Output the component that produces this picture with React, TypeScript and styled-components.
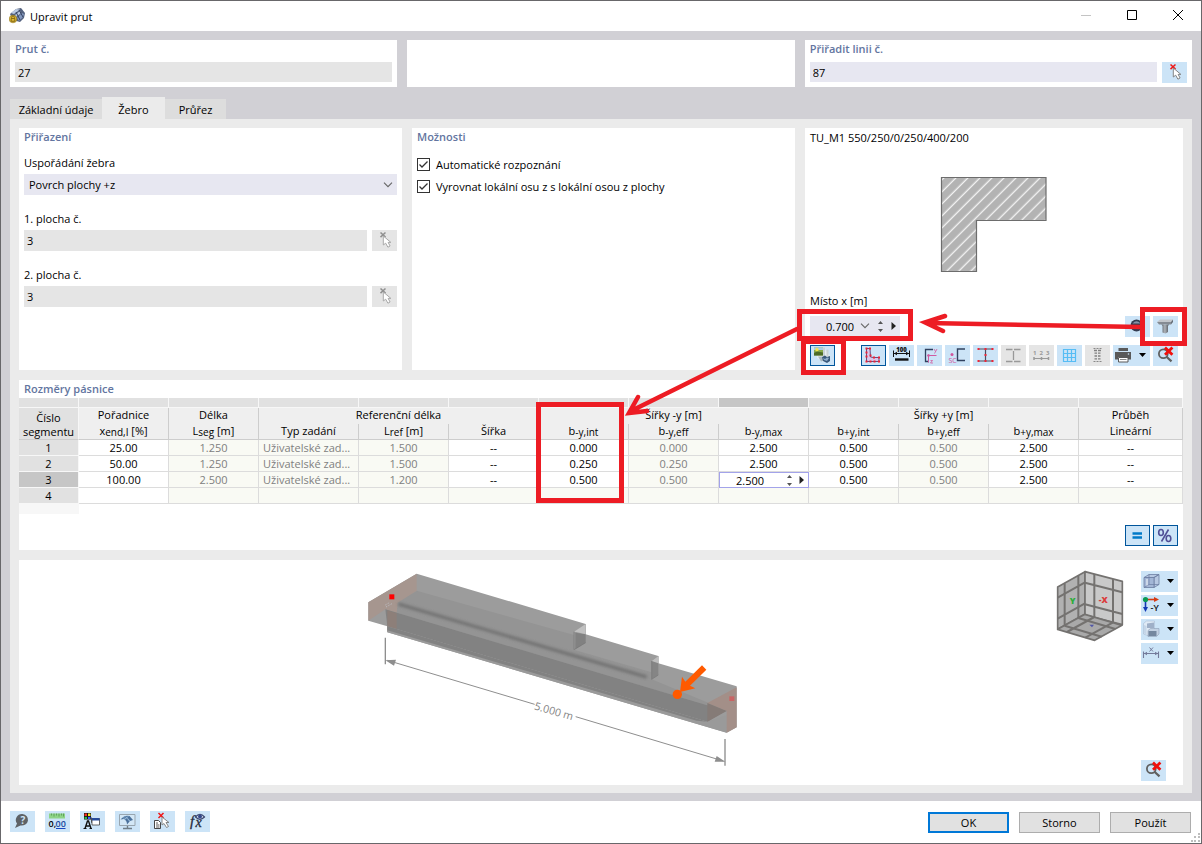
import React from "react";
import styled, { createGlobalStyle, css } from "styled-components";

const GlobalStyle = createGlobalStyle`
  * { box-sizing: border-box; }
  body { margin: 0; background: #fff; }
  body, button, input, select {
    font-family: "Open Sans", "Noto Sans", sans-serif;
    font-size: 11px;
    color: #000;
  }
  button, input, select { margin: 0; padding: 0; border: 0; border-radius: 0; outline: none; }
`;

/* ---------- window frame ---------- */

const Window = styled.div`
  position: relative;
  display: flex;
  flex-direction: column;
  min-height: 100vh;
  border: 1px solid #68676a;
  background: #fff;
`;

const TitleBar = styled.header`
  display: flex;
  align-items: center;
  height: 30px;
  padding-left: 8px;
  gap: 5px;
`;

const Title = styled.h1`
  flex: 1;
  margin: 0;
  font-size: 11px;
  font-weight: 400;
`;

const WindowControls = styled.div`
  display: flex;
`;

const WindowButton = styled.button`
  display: grid;
  place-items: center;
  width: 46px;
  height: 30px;
  padding-bottom: 2px;
  background: none;
`;

const Body = styled.main`
  display: flex;
  flex: 1;
  flex-direction: column;
  padding: 9px 9px 8px;
  background: #d1d0d5;
`;

const HeaderCards = styled.div`
  display: grid;
  grid-template-columns: 1fr 1fr 1fr;
  gap: 10px;
`;

const HeaderCard = styled.section`
  min-height: 47px;
  padding: 0 5px 4px;
  background: #fff;
`;

const CardTitle = styled.h2<{ $gap?: number }>`
  margin: 0 0 ${(p) => p.$gap ?? 0}px;
  font-size: 11px;
  font-weight: 600;
  line-height: 18px;
  color: #6375a0;
`;

const Tabs = styled.nav`
  display: flex;
  align-items: flex-end;
  margin-top: 10px;
`;

const Tab = styled.button<{ $active?: boolean; $width: number }>`
  width: ${(p) => p.$width}px;
  height: ${(p) => (p.$active ? 22 : 20)}px;
  padding-top: ${(p) => (p.$active ? 2 : 0)}px;
  background: ${(p) => (p.$active ? "#ebebeb" : "#dddddd")};
`;

const Page = styled.div`
  display: flex;
  flex: 1;
  flex-direction: column;
  gap: 10px;
  padding: 9px 9px 8px;
  background: #ebebeb;
`;

const Panels = styled.div`
  display: grid;
  grid-template-columns: 383fr 383fr 378fr;
  gap: 10px;
`;

const Panel = styled.section`
  display: flex;
  flex-direction: column;
  min-width: 0;
  min-height: 242px;
  padding: 0 5px 4px;
  background: #fff;
`;

/* ---------- form parts ---------- */

const Label = styled.label`
  display: block;
  line-height: 16px;
  margin-bottom: 3px;
`;

const FieldGroup = styled.div`
  margin-bottom: 16px;
`;

const FieldRow = styled.div`
  display: flex;
  gap: 5px;
`;

const TextField = styled.input<{ $editable?: boolean; $height?: number }>`
  flex: 1;
  min-width: 0;
  width: 100%;
  height: ${(p) => p.$height ?? 21}px;
  padding: 0 3px;
  background: ${(p) => (p.$editable ? "#e7e7f1" : "#e5e5e5")};
`;

const SelectBox = styled.div`
  display: grid;
  align-items: center;
  background: #e7e7f1;

  select, svg { grid-area: 1 / 1; }
  svg { justify-self: end; margin-right: 4px; pointer-events: none; }
`;

const Select = styled.select`
  appearance: none;
  width: 100%;
  height: 21px;
  padding: 0 20px 0 5px;
  background: transparent;
`;

const CheckList = styled.div`
  display: flex;
  flex-direction: column;
`;

const CheckLabel = styled.label`
  display: flex;
  align-items: center;
  gap: 6px;
  height: 22px;
`;

const CheckMark = styled.span`
  display: grid;
  width: 13px;
  height: 13px;

  input, svg { grid-area: 1 / 1; }
  svg { display: none; pointer-events: none; }
  input:checked + svg { display: block; }
`;

const CheckInput = styled.input`
  appearance: none;
  width: 13px;
  height: 13px;
  border: 1px solid #333;
  background: #fff;
`;

const toneBackground = { blue: "#cce4f7", gray: "#e5e5e5" };

const IconButton = styled.button<{ $tone?: "blue" | "gray"; $pressed?: boolean; $wide?: boolean }>`
  flex: none;
  display: block;
  width: ${(p) => (p.$wide ? 37 : 25)}px;
  height: 21px;
  background: ${(p) => toneBackground[p.$tone ?? "blue"]};
  ${(p) => p.$pressed && css`box-shadow: inset 0 0 0 1px #00559b;`}

  svg { display: block; }
`;

/* ---------- section preview ---------- */

const SectionName = styled.p`
  margin: 0;
  line-height: 20px;
`;

const SectionDrawing = styled.div`
  display: grid;
  flex: 1;
  place-items: center;
  padding-top: 8px;
`;

const LocationRow = styled.div`
  display: flex;
  align-items: flex-start;
  gap: 3px;
  height: 21px;
  margin: 4px 0 8px;
`;

const Spinner = styled.div`
  display: flex;
  align-items: center;
  width: 90px;
  height: 20px;
  padding-left: 12px;
  margin-right: auto;
  background: #e7e7f1;
`;

const SpinnerInput = styled.input`
  width: 37px;
  height: 20px;
  padding-left: 4px;
  background: transparent;
`;

const TinyButton = styled.button<{ $width: number }>`
  flex: none;
  display: grid;
  place-items: center;
  width: ${(p) => p.$width}px;
  height: 14px;
  background: none;
`;

const Toolbar = styled.div`
  display: flex;
  gap: 3px;

  > :first-child { margin-right: auto; }
`;

/* ---------- table ---------- */

const TablePanel = styled.section`
  padding-bottom: 4px;
  background: #fff;

  > h2 { padding-left: 5px; }
`;

const Table = styled.table`
  width: 100%;
  table-layout: fixed;
  border-collapse: separate;
  border-spacing: 0;

  th, td { padding: 0; font-weight: 400; text-align: center; white-space: nowrap; }
  sub { font-size: 10px; line-height: 0; vertical-align: -1px; }
`;

const StripCell = styled.td<{ $selected?: boolean }>`
  height: 10px;
  border-right: 1px solid #f7f7f7;
  border-bottom: 1px solid #f7f7f7;
  background: ${(p) => (p.$selected ? "#c6c6c6" : "#e1e1e1")};
`;

const CornerHead = styled.th`
  && {
    height: 32px;
    padding-top: 3px;
    white-space: normal;
  }
  border-right: 1px solid #f7f7f7;
  border-bottom: 1px solid #cdcdcd;
  background: #e1e1e1;
  line-height: 14px;
`;

const GroupHead = styled.th`
  height: 16px;
  line-height: 14px;
  vertical-align: top;
  border-right: 1px solid #cdcdcd;
  background: #efefef;
`;

const ColumnHead = styled.th`
  height: 16px;
  line-height: 14px;
  vertical-align: top;
  border-right: 1px solid #cdcdcd;
  border-bottom: 1px solid #cdcdcd;
  background: #efefef;
`;

const RowHead = styled.th<{ $selected?: boolean }>`
  height: 16px;
  line-height: 15px;
  border-right: 1px solid #f7f7f7;
  border-bottom: 1px solid #f7f7f7;
  background: ${(p) => (p.$selected ? "#c6c6c6" : "#e1e1e1")};
`;

const Cell = styled.td<{ $locked?: boolean; $left?: boolean }>`
  height: 16px;
  line-height: 15px;
  border-right: 1px solid #dcdcdc;
  border-bottom: 1px solid #dcdcdc;
  background: ${(p) => (p.$locked ? "#f9faf4" : "#fff")};
  color: ${(p) => (p.$locked ? "#808080" : "#000")};
  ${(p) => p.$left && css`&& { padding-left: 4px; text-align: left; }`}
`;

const EditCell = styled.td`
  height: 16px;
  background: #fff;
`;

const CellEditor = styled.div`
  display: flex;
  align-items: center;
  height: 16px;
  border: 1px solid #a3a3ea;
`;

const CellInput = styled.input`
  flex: 1;
  min-width: 0;
  height: 14px;
  padding-left: 16px;
  background: transparent;
`;

const TailCell = styled.td`
  height: 10px;
  background: #f7f7f7;
`;

const TableActions = styled.div`
  display: flex;
  justify-content: flex-end;
  gap: 3px;
  padding: 11px 5px 0;
`;

/* ---------- viewer and footer ---------- */

const Viewer = styled.section`
  display: flex;
  flex: 1;
  min-height: 225px;
  padding: 10px 5px 4px;
  background: #fff;
`;

const Scene = styled.div`
  display: flex;
  flex: 1;
  justify-content: center;
`;

const ViewTools = styled.div`
  display: flex;
  flex-direction: column;
  gap: 3px;
  margin: 1px 0 0 17px;

  > :last-child { margin-top: auto; }
`;

const Footer = styled.footer`
  position: relative;
  display: flex;
  align-items: center;
  gap: 10px;
  height: 42px;
  padding: 0 10px 0 9px;
`;

const FooterTools = styled.div`
  display: flex;
  gap: 10px;
  margin-right: auto;
  padding-bottom: 2px;
`;

const DialogButton = styled.button<{ $primary?: boolean }>`
  width: 81px;
  height: 21px;
  background: #e1e1e1;
  border: ${(p) => (p.$primary ? "2px solid #0078d7" : "1px solid #adadad")};
`;

const Grip = styled.svg`
  position: absolute;
  right: 1px;
  bottom: 1px;
`;

const Annotations = styled.svg`
  position: absolute;
  top: -1px;
  left: -1px;
  width: calc(100% + 2px);
  height: calc(100% + 2px);
  pointer-events: none;
`;

/* ---------- icons ---------- */

const Icon = ({ children, w = 25 }: { children: React.ReactNode; w?: number }) => (
  <svg width={w} height="21" viewBox={`0 0 ${w} 21`} fill="none" aria-hidden="true">
    {children}
  </svg>
);

const Chevron = () => (
  <svg width="10" height="6" viewBox="0 0 10 6" fill="none" stroke="#666" strokeWidth="1.1" aria-hidden="true">
    <path d="M1 .7 5 4.7 9 .7" />
  </svg>
);

const UpDown = () => (
  <svg width="7" height="11" viewBox="0 0 7 11" fill="#555" aria-hidden="true">
    <path d="M3.5 0 6 3H1zM3.5 11 6 8H1z" />
  </svg>
);

const RightTriangle = () => (
  <svg width="5" height="8" viewBox="0 0 5 8" fill="#222" aria-hidden="true">
    <path d="M.5 0 5 4 .5 8z" />
  </svg>
);

const PickIcon = ({ muted }: { muted?: boolean }) => (
  <Icon>
    <path d="M8.500 2.500l5 4.600M13.500 2.500l-5 4.600" stroke={muted ? "#8f8f8f" : "#f01818"} strokeWidth="1.500" />
    <path
      d="M11.300 6v9l2.400-1.800 2.200 4 2.200-1.200-2-3.600h2.800z"
      fill="#fff"
      stroke={muted ? "#a9a9a9" : "#858585"}
      strokeWidth="1"
    />
  </Icon>
);

const ResetZoomIcon = () => (
  <Icon>
    <circle cx="10.300" cy="8.800" r="4.400" stroke="#606060" strokeWidth="1.800" />
    <path d="M13.500 11.800l5 4.600" stroke="#606060" strokeWidth="2.200" />
    <path d="M12 2.600l7.400 7.200M19.400 2.600L12 9.800" stroke="#f0100c" strokeWidth="2.800" />
  </Icon>
);

const DropIcon = ({ children, x = 26 }: { children: React.ReactNode; x?: number }) => (
  <Icon w={37}>
    {children}
    <path d={`M${x} 8h7l-3.500 4z`} fill="#000" />
  </Icon>
);

const AppIcon = () => (
  <svg width="16" height="16" viewBox="0 0 16 16" aria-hidden="true">
    <path d="M1 6 7 1l5-1 4 5-1 5-4 4-7-2z" fill="#53617e" />
    <path d="M2 5 7 1l4 .5L5 6zM6 7l5-4 1 2-5 4z" fill="#b9c9e2" />
    <path d="m8 10 5-5 2 1-1 3-4 4z" fill="#8196bd" />
    <path d="M10 2l4 7M7 4l4 8" stroke="#34415f" />
    <circle cx="4" cy="11" r="3.800" fill="#dfb936" stroke="#8b7322" strokeWidth=".6" />
    <path d="M2.600 10.500V9.400a1.400 1.400 0 0 1 2.800 0v1.100M2.200 10.500h3.600v2.800H2.200z" fill="none" stroke="#816413" strokeWidth=".9" />
  </svg>
);

const SectionImageIcon = () => (
  <Icon>
    <path d="M8 3h6l6 8-6 6-7-4z" fill="#e9eef0" />
    <path d="M13 2.500h2v9h-2zM16.500 4.500h2v7h-2z" fill="#c9d2d6" />
    <path d="M4 2.500h9v8H4z" fill="#87a84a" />
    <path d="M4 2.500h9v2.500H4z" fill="#a8cde5" />
    <circle cx="7" cy="4.800" r="1.700" fill="#f5e44b" />
    <path d="M4 8l3-1.500 6 1v3H4z" fill="#4d6b27" />
    <path d="M8 11.500h4l2 4-3 1z" fill="#a9b8bf" />
    <path d="M12 12l3-1.500 2 1.500 3-1v5l-3 2-4-2z" fill="#38587b" />
    <path d="M13 13l2 1 2-1.500 2 .5-2 3-3-1z" fill="#8eadce" />
  </Icon>
);

const OutlineIcon = () => (
  <Icon>
    <path d="M5.500 3.500H9l.5 8.500 3 .5h5.500v4H5.500z" fill="#d9c5e8" stroke="#5a3f72" strokeWidth=".9" />
    <g fill="#ee2035">
      <path d="M4.500 2.500h2v2h-2zM8 2.500h2v2H8zM4.500 6.500h2v2h-2zM4.500 10.500h2v2h-2zM8.500 9.500h2v2h-2z" />
      <path d="M4.500 15.500h2v2h-2zM8.500 15.500h2v2h-2zM12.500 15.500h2v2h-2zM17 15.500h2v2h-2zM17 11.500h2v2h-2zM12 11.500h2v2h-2z" />
    </g>
  </Icon>
);

const DimensionIcon = () => (
  <Icon>
    <text x="12.500" y="6.500" textAnchor="middle" fontFamily="Open Sans" fontSize="6" fontWeight="800" fill="#111">100</text>
    <path d="M5 8.500h15" stroke="#111" strokeWidth="1" />
    <path d="M5 8.500l3-1.700v3.400zM20 8.500l-3-1.700v3.400z" fill="#111" />
    <path d="M4.500 5.500v6.500M20.500 5.500v6.500" stroke="#111" />
    <path d="M6 14.500h13.500" stroke="#111" strokeWidth="2.400" />
  </Icon>
);

const AxesIcon = () => (
  <Icon>
    <path d="M16 4.500H8.500v12H12" stroke="#30415f" strokeWidth="1.300" />
    <path d="M10.500 10.500h9M11.500 9.500v8" stroke="#d05aa0" strokeWidth="1" />
    <path d="M17 4l1.500 2.500M20 4l-2.500 4.500M13.500 15.500h2l-2 2.500h2.500" stroke="#d05aa0" strokeWidth=".8" />
    <circle cx="11.500" cy="10.500" r="1.300" fill="#d05aa0" />
  </Icon>
);

const ShearCenterIcon = () => (
  <Icon>
    <path d="M20 4H12.500v11.500H20" stroke="#30415f" strokeWidth="1.400" />
    <circle cx="7" cy="9.500" r="1.500" fill="#d0559c" />
    <text x="3.500" y="18" fontFamily="Open Sans" fontSize="7" fill="#d0559c">SC</text>
  </Icon>
);

const StressPointsIcon = () => (
  <Icon>
    <path d="M5 4h15M5 16h15M12.500 4v12" stroke="#4c4c60" strokeWidth="1.200" />
    <path d="M4.500 4h2M11.500 4h2M18.500 4h2M4.500 16h2M11.500 16h2M18.500 16h2M11.500 10h2" stroke="#ee2538" strokeWidth="2" />
  </Icon>
);

const PartsIcon = () => (
  <Icon>
    <path d="M5 4.500h6.500M13 4.500h6.500M5 16.500h6.500M13 16.500h6.500M12.500 6v9" stroke="#999" strokeWidth="1.300" />
  </Icon>
);

const NumberingIcon = () => (
  <Icon>
    <text x="4" y="10" fontFamily="Open Sans" fontSize="6" fontWeight="700" fill="#999">1</text>
    <text x="10.500" y="10" fontFamily="Open Sans" fontSize="6" fontWeight="700" fill="#999">2</text>
    <text x="17" y="10" fontFamily="Open Sans" fontSize="6" fontWeight="700" fill="#999">3</text>
    <path d="M5 13.500h15" stroke="#999" />
    <path d="M5 12v3M12.500 12v3M19.500 12v3" stroke="#999" strokeWidth="1.500" />
  </Icon>
);

const GridIcon = () => (
  <Icon>
    <path d="M6 4.500h13M6 8.500h13M6 12.500h13M6 16.500h13M6.500 4v13M10.500 4v13M14.500 4v13M18.500 4v13" stroke="#56bdf5" strokeWidth="1.200" />
  </Icon>
);

const FibersIcon = () => (
  <Icon>
    <path d="M8.500 3.500h8M8.500 16.500h8" stroke="#888" strokeDasharray="2 1" />
    <path d="M9 5.500h3M13 5.500h3M9.500 8.200h2.500M13 8.200h2.500M9.500 11h2.500M13 11h2.500M9.500 13.800h2.500M13 13.800h2.500" stroke="#808080" strokeWidth="1.300" />
  </Icon>
);

const PrintIcon = () => (
  <DropIcon>
    <path d="M5.500 3h9.500v3H5.500z" fill="#595959" />
    <path d="M2 7h16v7.500h-3v-2.500H5v2.500H2z" fill="#595959" />
    <path d="M5.500 12.500h9.500V17H5.500z" fill="#fff" stroke="#595959" />
    <path d="M7 14.500h6.500" stroke="#888" />
    <circle cx="15.500" cy="9" r=".8" fill="#cce4f7" />
  </DropIcon>
);

const EyeIcon = () => (
  <Icon>
    <circle cx="11.500" cy="9.500" r="6" fill="#343c50" />
    <path d="M7.500 7.500q4-4.500 8 0z" fill="#8792a8" />
    <path d="M8.500 11.500a3.300 2.500 0 0 0 6 0z" fill="#fff" />
  </Icon>
);

const BeamIcon = () => (
  <Icon>
    <defs>
      <linearGradient id="beamWeb" x1="0" x2="1">
        <stop offset="0" stopColor="#5c6168" />
        <stop offset=".45" stopColor="#aeb4ba" />
        <stop offset="1" stopColor="#4c5158" />
      </linearGradient>
    </defs>
    <path d="M4 6 7 3.500h13L18 6z" fill="#c3c7cc" />
    <path d="M4 6h14v2.500H6z" fill="#858b93" />
    <path d="M18 6 20 3.500V6L18 8.500z" fill="#666c74" />
    <path d="M8.500 8.500H16l-1 1.500v6l-2.500 1.500-3-1V10z" fill="url(#beamWeb)" />
  </Icon>
);

const ViewBoxIcon = () => (
  <DropIcon>
    <path d="M3 6.500l5-3h10l-5 3zM13 6.500l5-3v10l-5 3z" fill="#b7c8e2" stroke="#6c7da2" strokeWidth=".8" />
    <path d="M3 6.500h10v10H3z" fill="#a3b6d6" stroke="#6c7da2" strokeWidth=".8" />
    <path d="M8 3.500v10H18M8 13.500l-5 3" stroke="#6c7da2" strokeWidth=".7" />
    <path d="M5 8h2v6.500H5z" fill="#fff" opacity=".45" />
  </DropIcon>
);

const ViewAxisIcon = () => (
  <DropIcon>
    <path d="M5 4.500h9" stroke="#d63a13" strokeWidth="1.600" />
    <path d="M13 2l5 2.500-5 2.500z" fill="#d63a13" />
    <path d="M4.500 6v7" stroke="#1238b5" strokeWidth="1.600" />
    <path d="M2 12h5l-2.500 5z" fill="#1238b5" />
    <circle cx="4.500" cy="4.500" r="2.600" fill="#0a9a54" />
    <text x="9.500" y="15.500" fontFamily="Open Sans" fontSize="9" fontWeight="600" fill="#111">-Y</text>
  </DropIcon>
);

const RenderIcon = () => (
  <DropIcon>
    <path d="M2.500 4.500l3-2.500h8v8l-3 2H8v5l-5.500-2z" fill="#dfeaf5" stroke="#9fb2cc" strokeWidth=".5" />
    <path d="M6 4.500l7-1V9H6z" fill="#9fb0c8" />
    <path d="M7 11.500 9.500 9.500H18V15l-2.500 2.500H7z" fill="#c2d1e3" stroke="#8093ad" strokeWidth=".5" />
    <path d="M7.500 12h8v5h-8z" fill="#74879f" />
    <path d="M3 6l2.500 1v8.500L3 14.500z" fill="#c5d6e8" />
  </DropIcon>
);

const LengthIcon = () => (
  <DropIcon>
    <path d="M2.500 8.500v6.500M17.500 8.500v6.500M3 10.500h14" stroke="#747b9b" strokeWidth="1.100" />
    <path d="M6 8.700l-3 1.800 3 1.800zM14 8.700l3 1.800-3 1.800z" fill="#747b9b" />
    <path d="M8.500 4.500l3.500 4M12 4.500 8.500 8.500" stroke="#747b9b" />
  </DropIcon>
);

const HelpIcon = () => (
  <Icon>
    <path d="M12.500 3a6.500 5.800 0 1 1-2 11.500L5 17l2-4.500A6 6 0 0 1 12.500 3z" fill="#5e6266" />
    <text x="12.800" y="13" textAnchor="middle" fontFamily="Open Sans" fontSize="10" fontWeight="700" fill="#cce4f7">?</text>
  </Icon>
);

const UnitsIcon = () => (
  <Icon>
    <path d="M4 2.500h16v5H4z" fill="#8ed487" />
    <path d="M6.500 2.500v2M9 2.500v3M11.500 2.500v2M14 2.500v3M16.500 2.500v2M18.500 2.500v3" stroke="#4a8d49" strokeWidth=".7" />
    <text x="3.500" y="15.500" fontFamily="Open Sans" fontSize="9" fontWeight="600" fill="#000">0,</text>
    <text x="10.500" y="15.500" fontFamily="Open Sans" fontSize="9" fontWeight="600" fill="#17489c">00</text>
    <path d="M11 17.500h9.500" stroke="#1748c0" />
  </Icon>
);

const DisplayIcon = () => (
  <Icon>
    <path d="M4 2h7v6.500H4z" fill="#111" />
    <path d="M4.500 2.500h2.500V5H4.500z" fill="#f23022" />
    <path d="M8 2.500h2.500V5H8z" fill="#f6e51d" />
    <path d="M4.500 5.800h2.500V8H4.500z" fill="#2db94b" />
    <path d="M8 5.800h2.500V8H8z" fill="#3b62ff" />
    <path d="M5 17.500 7.500 10h1l2.500 7.500M6 15h4" stroke="#111" strokeWidth="1.400" />
    <path d="M3.500 17.500h3M9.500 17.500H12" stroke="#111" />
    <path d="M11.500 6.500v5H12.500" stroke="#333" strokeWidth=".8" />
    <path d="M12 7.500h7.500v6.500H12z" fill="#fff" stroke="#444" strokeWidth=".8" />
    <path d="M12 7h7.500v2.500H12z" fill="#274b9b" />
  </Icon>
);

const MonitorIcon = () => (
  <Icon>
    <path d="M4.500 3.500h15.500v11H4.500z" fill="#d3e7f6" stroke="#98a5af" />
    <path d="M12.500 15v2M8 17.500h9" stroke="#6f7d87" strokeWidth="1.400" />
    <path d="M5.500 8.500q4-5 9-3.500l3.500 4-3 1-3 3.500q0-4-3-5.500z" fill="#4a709b" />
    <path d="M8 7q4-1 7 3M10.500 5.500q3.500 2 4 5M13.500 5.500q-3 1-4 3.500" stroke="#9cbede" strokeWidth=".7" />
  </Icon>
);

const SelectListIcon = () => (
  <Icon>
    <path d="M4.500 9.500h4l2 2v6h-6z" fill="#fff" stroke="#333" strokeWidth=".9" />
    <path d="M6 12h2M6 14h3.500M6 16h3.500" stroke="#333" strokeWidth=".8" />
    <path d="M8.500 2l5 5M13.500 2l-5 5" stroke="#f01818" strokeWidth="1.500" />
    <path d="M12 6v8l2-1.500 2.500 4 2-1-2.500-4H19z" fill="#fff" stroke="#858585" />
  </Icon>
);

const FormulaIcon = () => (
  <Icon>
    <text x="5" y="15" fontFamily="Liberation Serif" fontSize="15" fontStyle="italic" fill="#262b3c" stroke="#262b3c" strokeWidth=".3">f</text>
    <text x="10.500" y="16" fontFamily="Liberation Serif" fontSize="14" fontStyle="italic" fill="#262b3c" stroke="#262b3c" strokeWidth=".3">x</text>
    <path d="M10.500 6q4.500-5.500 9 0-4.500 4.500-9 0z" fill="#dbe6f4" stroke="#3b466e" strokeWidth="1.200" />
    <circle cx="15" cy="5.500" r="2" fill="#34478a" />
  </Icon>
);

/* ---------- drawings ---------- */

const CrossSection = () => (
  <svg width="108" height="98" viewBox="0 0 108 98" role="img" aria-label="Průřez">
    <defs>
      <pattern id="hatch" width="8.500" height="8.500" patternUnits="userSpaceOnUse" patternTransform="rotate(45)">
        <rect width="8.500" height="8.500" fill="#b3b3b3" />
        <path d="M4 0v8.500" stroke="#fff" strokeWidth="1.100" />
      </pattern>
    </defs>
    <path d="M1.500 1.500H106v43H36.500v51h-35z" fill="url(#hatch)" stroke="#6d6d6d" strokeWidth="1.200" />
  </svg>
);

const BeamScene = () => (
  <svg width="400" height="200" viewBox="-30 45 1200 600" fill="none" role="img" aria-label="5.000 m">
    <defs>
      <filter id="soft" x="-10%" y="-10%" width="120%" height="120%">
        <feGaussianBlur stdDeviation="4" />
      </filter>
    </defs>
    <path d="M200 56 707 207V238L925 303V325L1160 394V517L1130 533 112 232V214L55 197V142z" fill="#9c9c9c" />
    <path d="M200 107 672 240V284L905 352V373L1076 444 1127 467 106 163z" fill="#949494" />
    <path d="M55 142 200 56V107L143 143 140 178 106 163 55 197z" fill="#a6968f" />
    <path d="M106 163 1127 467 1072 500 112 214z" fill="#828282" />
    <path d="M112 166 140 175V222L112 230z" fill="#8d7f79" />
    <path d="M112 214 1072 500 1130 480V533L112 232z" fill="#9a9a9a" />
    <path d="M112 214 1072 500 1040 497 112 226z" fill="#828282" />
    <path d="M145 147 890 366" stroke="#666" strokeWidth="9" opacity=".8" filter="url(#soft)" />
    <path d="M672 230 707 207V263L672 284z" fill="#999" />
    <path d="M676 233 707 238V263L676 283z" fill="#818181" />
    <path d="M672 230 707 207V238L679 231z" fill="#c1c1c1" />
    <path d="M905 318 925 303V360L905 373z" fill="#858585" />
    <path d="M905 318 925 303V325z" fill="#bdbdbd" />
    <path d="M672 230V284L707 263M905 318V373L925 360" stroke="#777" strokeWidth="2" />
    <path d="M1160 397V517L1130 533V468L1072 444z" fill="#a38f88" />
    <path d="M1072 444 1130 468 1072 500z" fill="#857b77" />
    <path d="M106 150l14-8M108 156l18-10" stroke="#c6cbd6" strokeWidth="2" strokeDasharray="4 4" />
    <path d="M118 118h15v15h-15z" fill="#f00" />
    <path d="M1138 424h15v14h-15z" fill="#c96464" />
    <g stroke="#8e8e8e" strokeWidth="4">
      <path d="M106 248V328M1125 552V632" />
      <path d="M112 316 554 448M677 485 1120 618" strokeWidth="3" />
    </g>
    <path d="M106 316 138 314 132 332zM1126 620 1094 620 1100 603z" fill="#8e8e8e" />
    <text
      x="612"
      y="480"
      transform="rotate(16 612 468)"
      textAnchor="middle"
      fontFamily="Open Sans"
      fontSize="32"
      fill="#848484"
    >
      5.000 m
    </text>
    <path d="M1056 331 1069 344 1020 392 1036 400 990 411 996 365 1006 380z" fill="#ff5a00" />
    <circle cx="982" cy="418" r="14" fill="#ff5a00" />
  </svg>
);

type Point = [number, number];

const CubeFace = ({ o, u, v, fill }: { o: Point; u: Point; v: Point; fill: string }) => {
  const at = (a: number, b: number) =>
    `${Math.round(o[0] + u[0] * a + v[0] * b)} ${Math.round(o[1] + u[1] * a + v[1] * b)}`;
  return (
    <g stroke="#747270" strokeLinejoin="round">
      <path d={`M${at(0, 0)}L${at(1, 0)} ${at(1, 1)} ${at(0, 1)}z`} fill={fill} strokeWidth="5" />
      {[0.25, 0.75].map((t) => (
        <path key={t} d={`M${at(t, 0)}L${at(t, 1)}M${at(0, t)}L${at(1, t)}`} strokeWidth="6" />
      ))}
    </g>
  );
};

const ViewCube = () => (
  <svg width="68" height="72" viewBox="78 45 204 216" fill="none" role="img" aria-label="Navigační kostka">
    <CubeFace o={[165, 50]} u={[-82, 46]} v={[0, 127]} fill="#b1b1b1" />
    <CubeFace o={[165, 50]} u={[112, 29]} v={[0, 130]} fill="#c9c9c9" />
    <CubeFace o={[83, 223]} u={[82, -45]} v={[111, 33]} fill="#a9a9a9" />
    <text x="119" y="146" fontFamily="Open Sans" fontSize="26" fontWeight="800" fill="#2cae3a">Y</text>
    <text x="206" y="143" fontFamily="Open Sans" fontSize="26" fontWeight="800" fill="#db3a3a">-X</text>
    <path d="M178 209h14l-6 8z" fill="#5257a8" />
  </svg>
);

/* ---------- data ---------- */

const columnWidths = [60, 90, 90, 100, 90, 90, 90, 90, 90, 90, 90, 90];

const lockedColumns = [false, true, true, true, false, false, true, false, false, true, false, false];

const inputTypeColumn = 2;

const userInput = "Uživatelské zad...";

const segments = [
  ["25.00", "1.250", userInput, "1.500", "--", "0.000", "0.000", "2.500", "0.500", "0.500", "2.500", "--"],
  ["50.00", "1.250", userInput, "1.500", "--", "0.250", "0.250", "2.500", "0.500", "0.500", "2.500", "--"],
  ["100.00", "2.500", userInput, "1.200", "--", "0.500", "0.500", "2.500", "0.500", "0.500", "2.500", "--"],
];

const SegmentTable = () => (
  <Table>
    <colgroup>
      {columnWidths.map((w, i) => (
        <col key={i} width={w} />
      ))}
      <col />
    </colgroup>
    <thead>
      <tr>
        {Array.from({ length: 13 }, (_, i) => (
          <StripCell key={i} $selected={i === 8} />
        ))}
      </tr>
      <tr>
        <CornerHead rowSpan={2} scope="col">Číslo segmentu</CornerHead>
        <GroupHead>Pořadnice</GroupHead>
        <GroupHead>Délka</GroupHead>
        <GroupHead colSpan={3}>Referenční délka</GroupHead>
        <GroupHead colSpan={3}>Šířky -y [m]</GroupHead>
        <GroupHead colSpan={3}>Šířky +y [m]</GroupHead>
        <GroupHead>Průběh</GroupHead>
      </tr>
      <tr>
        <ColumnHead scope="col">x<sub>end,I</sub> [%]</ColumnHead>
        <ColumnHead scope="col">L<sub>seg</sub> [m]</ColumnHead>
        <ColumnHead scope="col">Typ zadání</ColumnHead>
        <ColumnHead scope="col">L<sub>ref</sub> [m]</ColumnHead>
        <ColumnHead scope="col">Šířka</ColumnHead>
        <ColumnHead scope="col">b<sub>-y,int</sub></ColumnHead>
        <ColumnHead scope="col">b<sub>-y,eff</sub></ColumnHead>
        <ColumnHead scope="col">b<sub>-y,max</sub></ColumnHead>
        <ColumnHead scope="col">b<sub>+y,int</sub></ColumnHead>
        <ColumnHead scope="col">b<sub>+y,eff</sub></ColumnHead>
        <ColumnHead scope="col">b<sub>+y,max</sub></ColumnHead>
        <ColumnHead scope="col">Lineární</ColumnHead>
      </tr>
    </thead>
    <tbody>
      {segments.map((row, r) => (
        <tr key={r}>
          <RowHead scope="row" $selected={r === 2}>{r + 1}</RowHead>
          {row.map((value, c) =>
            r === 2 && c === 7 ? (
              <EditCell key={c}>
                <CellEditor>
                  <CellInput aria-label="b-y,max" defaultValue={value} />
                  <TinyButton $width={12} aria-label="Krok"><UpDown /></TinyButton>
                  <TinyButton $width={13} aria-label="Další"><RightTriangle /></TinyButton>
                </CellEditor>
              </EditCell>
            ) : (
              <Cell key={c} $locked={lockedColumns[c]} $left={c === inputTypeColumn}>{value}</Cell>
            )
          )}
        </tr>
      ))}
      <tr>
        <RowHead scope="row">4</RowHead>
        {lockedColumns.map((_, c) => (
          <Cell key={c} $locked={c > 0} />
        ))}
      </tr>
      <tr>
        <TailCell />
      </tr>
    </tbody>
  </Table>
);

const SurfaceField = ({ id, label }: { id: string; label: string }) => (
  <FieldGroup>
    <Label htmlFor={id}>{label}</Label>
    <FieldRow>
      <TextField id={id} defaultValue="3" readOnly />
      <IconButton $tone="gray" aria-label="Vybrat plochu"><PickIcon muted /></IconButton>
    </FieldRow>
  </FieldGroup>
);

const CheckOption = ({ children }: { children: React.ReactNode }) => (
  <CheckLabel>
    <CheckMark>
      <CheckInput type="checkbox" defaultChecked />
      <svg width="13" height="13" viewBox="0 0 13 13" fill="none" stroke="#333" strokeWidth="1.300">
        <path d="M2.500 6.500 5 9 10.500 3.500" />
      </svg>
    </CheckMark>
    {children}
  </CheckLabel>
);

export default function App() {
  return (
    <Window>
      <GlobalStyle />
      <TitleBar>
        <AppIcon />
        <Title>Upravit prut</Title>
        <WindowControls>
          <WindowButton aria-label="Minimalizovat">
            <svg width="10" height="10" stroke="#c4c4c4"><path d="M0 5.500h10" /></svg>
          </WindowButton>
          <WindowButton aria-label="Maximalizovat">
            <svg width="10" height="10" fill="none" stroke="#000"><path d="M.5.5h9v9h-9z" /></svg>
          </WindowButton>
          <WindowButton aria-label="Zavřít">
            <svg width="10" height="10" stroke="#000"><path d="M0 0l10 10M10 0 0 10" /></svg>
          </WindowButton>
        </WindowControls>
      </TitleBar>

      <Body>
        <HeaderCards>
          <HeaderCard>
            <CardTitle $gap={4}><label htmlFor="member">Prut č.</label></CardTitle>
            <FieldRow><TextField id="member" defaultValue="27" readOnly $height={20} /></FieldRow>
          </HeaderCard>
          <HeaderCard />
          <HeaderCard>
            <CardTitle $gap={4}><label htmlFor="line">Přiřadit linii č.</label></CardTitle>
            <FieldRow>
              <TextField id="line" defaultValue="87" $editable $height={20} />
              <IconButton aria-label="Vybrat linii"><PickIcon /></IconButton>
            </FieldRow>
          </HeaderCard>
        </HeaderCards>

        <Tabs>
          <Tab $width={92}>Základní údaje</Tab>
          <Tab $width={63} $active>Žebro</Tab>
          <Tab $width={61}>Průřez</Tab>
        </Tabs>

        <Page>
          <Panels>
            <Panel>
              <CardTitle $gap={9}>Přiřazení</CardTitle>
              <FieldGroup>
                <Label htmlFor="layout">Uspořádání žebra</Label>
                <SelectBox>
                  <Select id="layout"><option>Povrch plochy +z</option></Select>
                  <Chevron />
                </SelectBox>
              </FieldGroup>
              <SurfaceField id="surface1" label="1. plocha č." />
              <SurfaceField id="surface2" label="2. plocha č." />
            </Panel>

            <Panel>
              <CardTitle $gap={7}>Možnosti</CardTitle>
              <CheckList>
                <CheckOption>Automatické rozpoznání</CheckOption>
                <CheckOption>Vyrovnat lokální osu z s lokální osou z plochy</CheckOption>
              </CheckList>
            </Panel>

            <Panel>
              <SectionName>TU_M1 550/250/0/250/400/200</SectionName>
              <SectionDrawing><CrossSection /></SectionDrawing>
              <Label htmlFor="location">Místo x [m]</Label>
              <LocationRow>
                <Spinner>
                  <SpinnerInput id="location" defaultValue="0.700" />
                  <TinyButton $width={12} aria-label="Rozbalit"><Chevron /></TinyButton>
                  <TinyButton $width={19} aria-label="Krok"><UpDown /></TinyButton>
                  <TinyButton $width={6} aria-label="Další"><RightTriangle /></TinyButton>
                </Spinner>
                <IconButton aria-label="Zobrazit"><EyeIcon /></IconButton>
                <IconButton aria-label="Nosník"><BeamIcon /></IconButton>
              </LocationRow>
              <Toolbar>
                <IconButton $pressed aria-label="Náhled průřezu"><SectionImageIcon /></IconButton>
                <IconButton $pressed aria-label="Obrys"><OutlineIcon /></IconButton>
                <IconButton aria-label="Kóty"><DimensionIcon /></IconButton>
                <IconButton aria-label="Osy"><AxesIcon /></IconButton>
                <IconButton aria-label="Střed smyku"><ShearCenterIcon /></IconButton>
                <IconButton aria-label="Napěťové body"><StressPointsIcon /></IconButton>
                <IconButton $tone="gray" aria-label="Části"><PartsIcon /></IconButton>
                <IconButton $tone="gray" aria-label="Číslování"><NumberingIcon /></IconButton>
                <IconButton aria-label="Rastr"><GridIcon /></IconButton>
                <IconButton $tone="gray" aria-label="Vlákna"><FibersIcon /></IconButton>
                <IconButton $wide aria-label="Tisk"><PrintIcon /></IconButton>
                <IconButton aria-label="Obnovit zvětšení"><ResetZoomIcon /></IconButton>
              </Toolbar>
            </Panel>
          </Panels>

          <TablePanel>
            <CardTitle>Rozměry pásnice</CardTitle>
            <SegmentTable />
            <TableActions>
              <IconButton $pressed aria-label="Absolutně">
                <Icon><path d="M7.500 8.500h9.500M7.500 12.500h9.500" stroke="#0079c8" strokeWidth="2.400" /></Icon>
              </IconButton>
              <IconButton $pressed aria-label="Procenta">
                <Icon>
                  <g stroke="#504f96" strokeWidth="1.600">
                    <ellipse cx="8" cy="7.500" rx="2.300" ry="3" />
                    <ellipse cx="15.500" cy="13.500" rx="2.300" ry="3" />
                    <path d="M15.500 4.500l-7 12" />
                  </g>
                </Icon>
              </IconButton>
            </TableActions>
          </TablePanel>

          <Viewer>
            <Scene><BeamScene /></Scene>
            <ViewCube />
            <ViewTools>
              <IconButton $wide aria-label="Pohled"><ViewBoxIcon /></IconButton>
              <IconButton $wide aria-label="Směr pohledu"><ViewAxisIcon /></IconButton>
              <IconButton $wide aria-label="Zobrazení"><RenderIcon /></IconButton>
              <IconButton $wide aria-label="Kótování"><LengthIcon /></IconButton>
              <IconButton aria-label="Obnovit pohled"><ResetZoomIcon /></IconButton>
            </ViewTools>
          </Viewer>
        </Page>
      </Body>

      <Footer>
        <FooterTools>
          <IconButton aria-label="Nápověda"><HelpIcon /></IconButton>
          <IconButton aria-label="Jednotky"><UnitsIcon /></IconButton>
          <IconButton aria-label="Vlastnosti zobrazení"><DisplayIcon /></IconButton>
          <IconButton aria-label="Náhled"><MonitorIcon /></IconButton>
          <IconButton aria-label="Výběr"><SelectListIcon /></IconButton>
          <IconButton aria-label="Vzorec"><FormulaIcon /></IconButton>
        </FooterTools>
        <DialogButton $primary>OK</DialogButton>
        <DialogButton>Storno</DialogButton>
        <DialogButton>Použít</DialogButton>
        <Grip width="9" height="9" fill="#bdbdbd" aria-hidden="true">
          <path d="M7 0h2v2H7zM3 3h2v2H3zM7 3h2v2H7zM0 7h2v2H0zM3 7h2v2H3zM7 7h2v2H7z" />
        </Grip>
      </Footer>

      <Annotations viewBox="0 0 1202 844" preserveAspectRatio="none" fill="none" stroke="#ed1c24" aria-hidden="true">
        <g strokeWidth="5">
          <path d="M799.500 311.500h111v27h-111zM803.500 341.500h40v31h-40zM1142.500 309.500h42v34h-42z" />
          <path d="M538.500 404.500h83v96h-83z" />
        </g>
        <g strokeWidth="4.500" strokeLinecap="round">
          <path d="M1141 327 927 323M945 316 925 322.500 943 331" />
          <path d="M797 329 631 411M638 397 629 413 647 411" />
        </g>
      </Annotations>
    </Window>
  );
}
